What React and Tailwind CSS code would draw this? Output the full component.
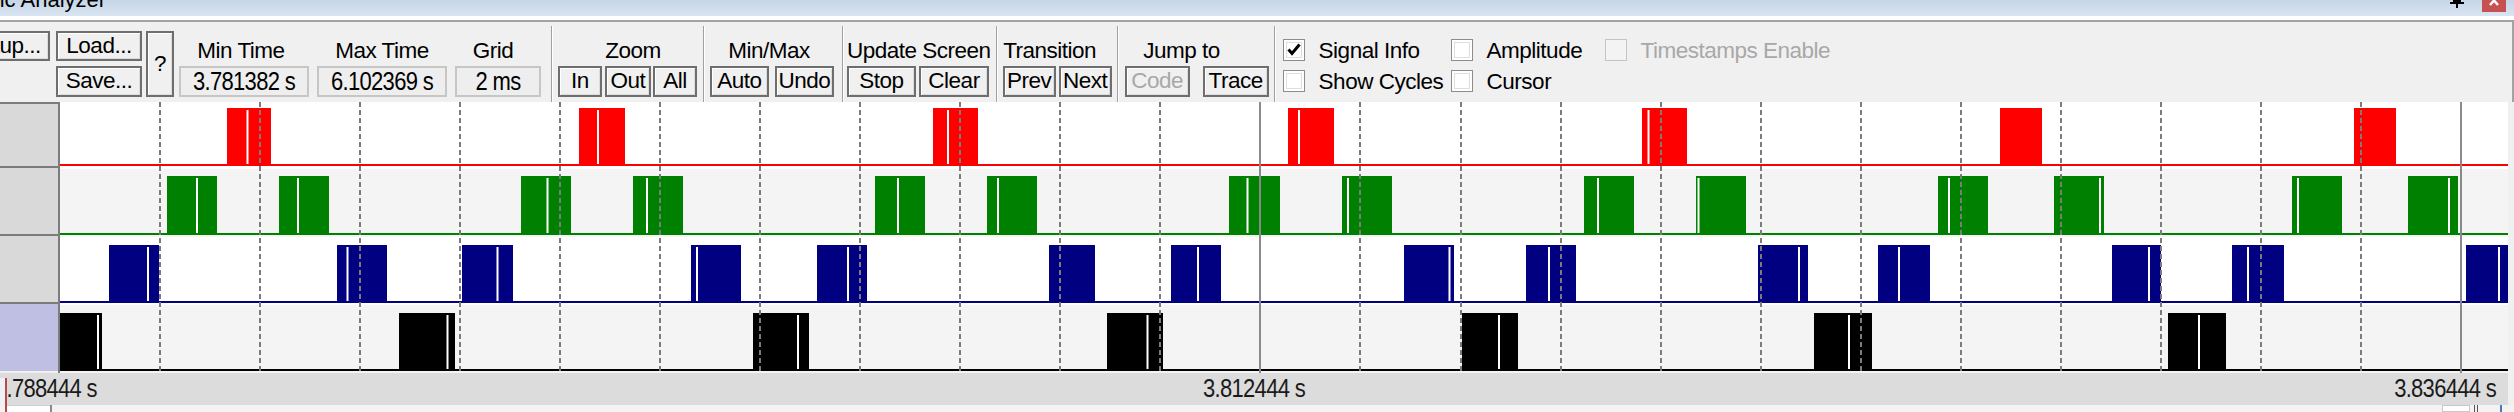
import React from "react";

const ROWS = [
  {
    color: "#ff0000", top: 6, base: 62,
    pulses: [[167,211,187.5],[519,565,538],[873,918,888],[1228,1274,1239],[1582,1627,1588.5],[1940,1982,null],[2294,2336,null]],
  },
  {
    color: "#008000", top: 74, base: 131,
    pulses: [[107,157,137],[219,269,238],[461,511,487.5],[573,623,587],[815,865,838],[927,977,938],[1169,1220,1187.5],[1282,1332,1288],[1524,1574,1538],[1636,1686,1638.5],[1878,1928,1889],[1994,2044,2040],[2232,2282,2238],[2348,2398,2389]],
  },
  {
    color: "#000080", top: 143, base: 199,
    pulses: [[49,99,88],[277,327,287.5],[402,453,437.5],[631,681,637],[757,807,788],[989,1035,null],[1111,1161,1138],[1344,1394,1389.5],[1466,1516,1489],[1698,1748,1739],[1818,1870,1839],[2052,2101,2089],[2172,2224,2188],[2406,2448,2439]],
  },
  {
    color: "#000000", top: 211, base: 267,
    pulses: [[0,42,38],[339,395,387.5],[693,749,738],[1047,1103,1087.5],[1402,1458,1439],[1754,1812,1789],[2108,2166,2139]],
  },
];

const NUM = "text-[22px] leading-none tracking-[-0.7px]";

function Num({ children, className = "" }) {
  return <span className={"inline-block scale-y-[1.15] whitespace-nowrap " + className}>{children}</span>;
}

function Btn({ children, className = "", disabled = false }) {
  return (
    <div
      className={
        "flex shrink-0 items-center justify-center border-2 border-[#6e6e6e] bg-[#f0f0f0] shadow-[inset_1px_1px_0_#ffffff,inset_-1px_-1px_0_#dcdcdc] text-[22.5px] leading-none tracking-[-0.5px] whitespace-nowrap " +
        (disabled ? "text-[#a8a8a8] " : "text-black ") +
        className
      }
    >
      {children}
    </div>
  );
}

function ValueBox({ children, className = "" }) {
  return (
    <div
      className={
        "flex h-[31px] shrink-0 items-center justify-center border-2 border-[#c6c6c6] bg-[#eeeeee] whitespace-nowrap " +
        NUM + " " +
        className
      }
    >
      <Num>{children}</Num>
    </div>
  );
}

function Group({ label, labelClass = "", children, className = "" }) {
  return (
    <div className={"flex shrink-0 flex-col pt-[13px] " + className}>
      <div className={"h-[31px] text-center text-[22.5px] leading-[31px] tracking-[-0.5px] whitespace-nowrap " + labelClass}>{label}</div>
      <div className="flex h-[31px]">{children}</div>
    </div>
  );
}

function Sep({ className = "" }) {
  return (
    <div className={"mt-[4px] h-[76px] w-[2px] shrink-0 border-l border-r border-l-[#a0a0a0] border-r-white " + className} />
  );
}

function Check({ label, checked = false, disabled = false }) {
  return (
    <div className="flex h-[22px] items-center gap-[14px]">
      <div
        className={
          "relative h-[22px] w-[22px] shrink-0 border " +
          (disabled
            ? "border-[#c4c4c4] bg-[#f3f3f3]"
            : "border-[#8c8c8c] bg-white shadow-[inset_0_0_0_2px_#ffffff,inset_0_0_0_3px_#dedede]")
        }
      >
        {checked && (
          <svg width="20" height="20" viewBox="0 0 20 20" className="absolute left-0 top-0">
            <path d="M4.5 9.5 L8 13.5 L15.5 4.5" fill="none" stroke="#000" strokeWidth="3" />
          </svg>
        )}
      </div>
      <span className={"pt-[2px] text-[22.5px] leading-none tracking-[-0.5px] whitespace-nowrap " + (disabled ? "text-[#a8a8a8]" : "text-black")}>
        {label}
      </span>
    </div>
  );
}

function Waveforms() {
  const grid = [];
  for (let k = 0; k < 24; k++) {
    const x = Math.round(100 + k * 100.04);
    const solid = k === 11 || k === 23;
    grid.push(
      <line
        key={k}
        x1={x}
        x2={x}
        y1={0}
        y2={271}
        stroke={solid ? "#8a8a8a" : "#7c7c7c"}
        strokeWidth="2"
        strokeDasharray={solid ? undefined : "5 3"}
      />
    );
  }
  return (
    <svg width="2448" height="271" viewBox="0 0 2448 271" className="block shrink-0">
      <rect x="0" y="0" width="2448" height="67" fill="#ffffff" />
      <rect x="0" y="67" width="2448" height="68" fill="#f4f4f4" />
      <rect x="0" y="135" width="2448" height="68" fill="#ffffff" />
      <rect x="0" y="203" width="2448" height="68" fill="#f4f4f4" />
      {ROWS.map((r, i) => (
        <g key={i}>
          <rect x="0" y={r.base} width="2448" height="2" fill={r.color} />
          {r.pulses.map(([s, e, g], j) => (
            <g key={j}>
              <rect x={s} y={r.top} width={e - s} height={r.base + 2 - r.top} fill={r.color} />
              {g !== null && <rect x={g - 1} y={r.top + 2} width="2" height={r.base - r.top - 2} fill="#ffffff" />}
            </g>
          ))}
        </g>
      ))}
      {grid}
    </svg>
  );
}

export default function App() {
  return (
    <div className="h-[412px] w-[2514px] overflow-hidden bg-[#f0f0f0] font-['Liberation_Sans',Arial,sans-serif] text-black">
      {/* title bar */}
      <div className="flex h-[16px] justify-between overflow-hidden bg-gradient-to-b from-[#c6d6e7] to-[#d9e5f1]">
        <span className="-ml-[37px] -mt-[11px] text-[22px] leading-[22px] whitespace-nowrap text-black">Logic Analyzer</span>
        <div className="flex items-start pr-[8px]">
          <svg width="14" height="8" viewBox="0 0 14 8" className="mr-[18px]">
            <rect x="3" y="0" width="8" height="2" fill="#000" />
            <rect x="0" y="2" width="14" height="2" fill="#000" />
            <rect x="6" y="4" width="2" height="4" fill="#000" />
          </svg>
          <div className="h-[12px] w-[24px] bg-[#c75050]">
            <svg width="24" height="12" viewBox="0 0 24 12">
              <path d="M8 -4 L16 5 M16 -4 L8 5" stroke="#fff" strokeWidth="2.5" />
            </svg>
          </div>
        </div>
      </div>
      <div className="h-[4px] bg-white" />

      {/* toolbar */}
      <div className="flex h-[82px] border-r-2 border-t-2 border-[#a3a3a3] bg-[#f0f0f0]">
        <div className="-ml-[42px] flex shrink-0 pt-[9px]">
          <Btn className="h-[30px] w-[92px]">Setup...</Btn>
          <div className="ml-[6px] flex flex-col gap-[5px]">
            <Btn className="h-[30px] w-[86px]">Load...</Btn>
            <Btn className="h-[31px] w-[86px]">Save...</Btn>
          </div>
          <Btn className="ml-[4px] h-[66px] w-[28px]">?</Btn>
        </div>

        <Group label="Min Time" className="ml-[5px]" labelClass="pr-[6px]">
          <ValueBox className="w-[130px]">3.781382 s</ValueBox>
        </Group>
        <Group label="Max Time" className="ml-[8px]" labelClass="">
          <ValueBox className="w-[130px]">6.102369 s</ValueBox>
        </Group>
        <Group label="Grid" className="ml-[8px]" labelClass="pr-[10px]">
          <ValueBox className="w-[86px]">2 ms</ValueBox>
        </Group>

        <Sep className="ml-[10px]" />
        <Group label="Zoom" className="ml-[5px]" labelClass="pl-[11px]">
          <Btn className="w-[44px]">In</Btn>
          <Btn className="ml-[3px] w-[46px]">Out</Btn>
          <Btn className="ml-[2px] w-[44px]">All</Btn>
        </Group>

        <Sep className="ml-[6px]" />
        <Group label="Min/Max" className="ml-[5px]" labelClass="pr-[6px]">
          <Btn className="w-[59px]">Auto</Btn>
          <Btn className="ml-[6px] w-[59px]">Undo</Btn>
        </Group>

        <Sep className="ml-[8px]" />
        <Group label="Update Screen" className="ml-[3px]">
          <Btn className="w-[69px]">Stop</Btn>
          <Btn className="ml-[3px] w-[70px]">Clear</Btn>
        </Group>

        <Sep className="ml-[5px]" />
        <Group label="Transition" className="ml-[5px]" labelClass="pr-[15px]">
          <Btn className="w-[53px]">Prev</Btn>
          <Btn className="ml-[3px] w-[53px]">Next</Btn>
        </Group>

        <Sep className="ml-[5px]" />
        <Group label="Jump to" className="ml-[6px]" labelClass="pr-[30px]">
          <Btn className="w-[65px]" disabled>Code</Btn>
          <Btn className="ml-[13px] w-[66px]">Trace</Btn>
        </Group>

        <Sep className="ml-[5px]" />
        <div className="ml-[7px] mt-[17px] grid h-fit grid-cols-[168px_154px_auto] gap-y-[9px]">
          <Check label="Signal Info" checked />
          <Check label="Amplitude" />
          <Check label="Timestamps Enable" disabled />
          <Check label="Show Cycles" />
          <Check label="Cursor" />
        </div>
      </div>

      {/* chart */}
      <div className="flex h-[271px]">
        <div className="flex w-[60px] shrink-0 flex-col border-r-2 border-t-2 border-[#7c7c7c]">
          <div className="h-[64px] border-b-2 border-[#7c7c7c] bg-[#d9d9d9]" />
          <div className="h-[68px] border-b-2 border-[#7c7c7c] bg-[#d9d9d9]" />
          <div className="h-[68px] border-b-2 border-[#7c7c7c] bg-[#d9d9d9]" />
          <div className="h-[67px] bg-[#bfbfe3]" />
        </div>
        <Waveforms />
        <div className="w-[6px] shrink-0 bg-[#f0f0f0]" />
      </div>

      {/* time axis */}
      <div className="flex h-[32px]">
        <div className={"relative grid w-[2508px] shrink-0 grid-cols-3 items-center bg-[#dcdcdc] text-[#1a1a1a] " + NUM}>
          <Num className="-ml-[5px] justify-self-start">3.788444 s</Num>
          <Num className="justify-self-center">3.812444 s</Num>
          <Num className="justify-self-end pr-[12px]">3.836444 s</Num>
          <div className="absolute left-0 top-[5px] h-[27px] w-[7px] border-r-2 border-[#b84a4a] bg-[#eef2f6]" />
        </div>
        <div className="w-[6px] shrink-0 bg-[#f0f0f0]" />
      </div>

      {/* bottom strip */}
      <div className="flex h-[7px] bg-[#f3f3f3]">
        <div className="w-[7px] shrink-0 border-r-2 border-[#b84a4a]" />
        <div className="w-[43px] shrink-0 border-t border-[#cfcfcf] bg-white" />
        <div className="w-[2px] shrink-0 bg-[#8a8a8a]" />
        <div className="flex-1" />
        <div className="w-[28px] shrink-0 border border-[#c8c8c8] bg-white" />
        <div className="ml-[4px] w-[1px] shrink-0 bg-[#555]" />
        <div className="ml-[2px] w-[1px] shrink-0 bg-[#555]" />
        <div className="ml-[22px] w-[2px] shrink-0 bg-[#4a7ab8]" />
        <div className="w-[12px] shrink-0" />
      </div>
    </div>
  );
}
